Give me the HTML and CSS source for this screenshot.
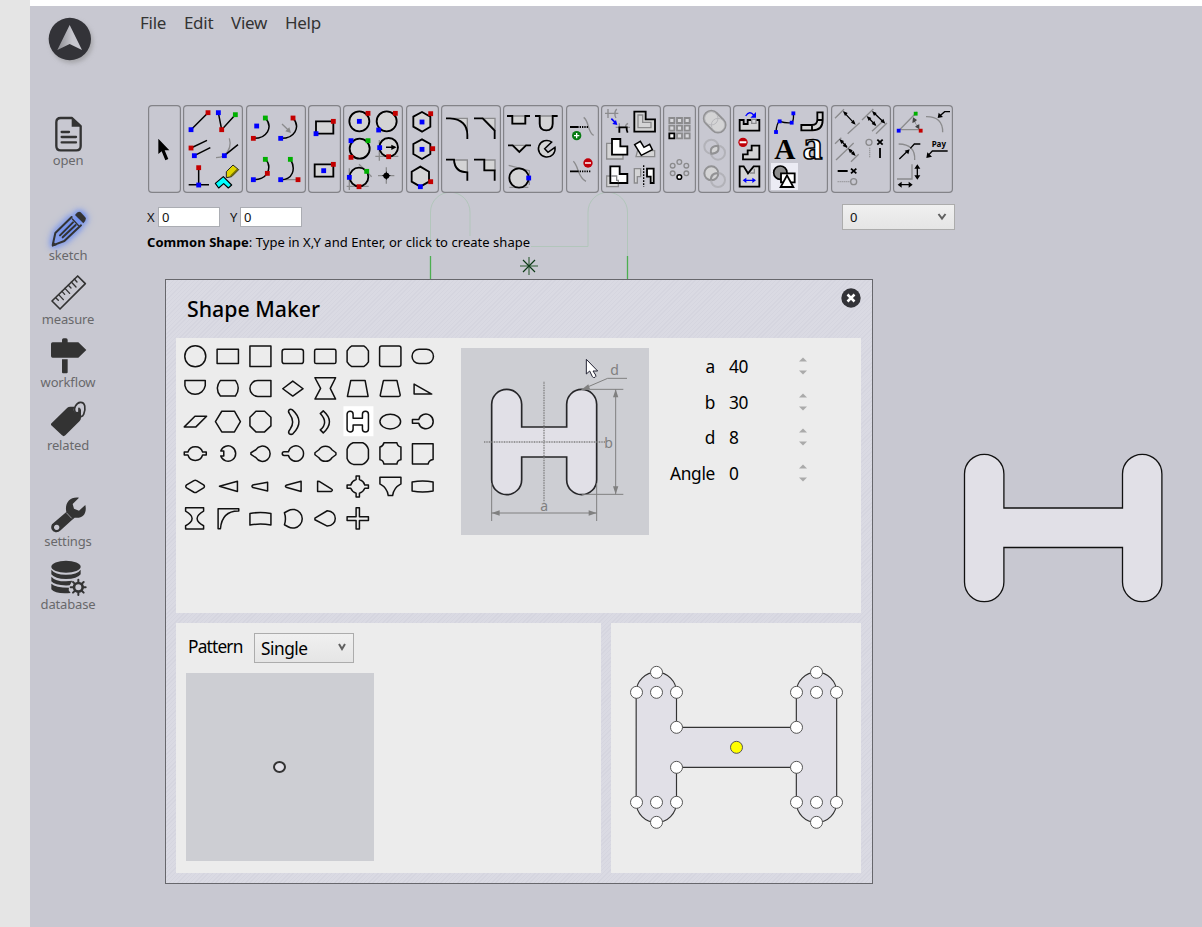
FILE: index.html
```html
<!DOCTYPE html>
<html lang="en">
<head>
<meta charset="utf-8">
<title>Shape Maker</title>
<link rel="stylesheet" href="styles.css">
</head>
<body>
<div class="gutter"></div>
<div class="app">
  <svg class="canvas" viewBox="30 6 1172 921">
    <g class="ghost">
      <path d="M430.5 250V212a19.7 19.7 0 0 1 39.5 0V236M531 246.5H588V212a19.7 19.7 0 0 1 39.5 0V256"/>
      <path class="live" d="M430.5 256V280M627.5 256V280"/>
    </g>
    <path class="star" d="M520 266H538M529 257V275"/>
    <path class="star dark" d="M523 260L535 272M535 260L523 272"/>
    <path class="shape" d="M964.5 474a19.7 19.7 0 0 1 39.4 0V508H1122.5V474a19.7 19.7 0 0 1 39.4 0V582a19.7 19.7 0 0 1-39.4 0V547.5H1003.9V582a19.7 19.7 0 0 1-39.4 0Z"/>
  </svg>

  <nav class="sidebar">
    <svg class="logo" viewBox="141 48 150 150">
      <circle cx="209.500" cy="117" r="63.500"/>
      <path d="M209 75L246 150 209 132 172 150Z" fill="url(#steel)"/>
      <defs><linearGradient id="steel"><stop offset="0" stop-color="#8b8b90"/><stop offset=".6" stop-color="#c8c8cf"/><stop offset="1" stop-color="#c8c8cf"/></linearGradient></defs>
    </svg>
    <a class="item open"><svg viewBox="150 346 108 108"><path class="ln" d="M182 352H216L242 376V436Q242 449 229 449H182Q169 449 169 436V365Q169 352 182 352Z" stroke-width="7"/><path d="M215 352V378H244L216 350Z"/><path class="ln" d="M185 394H207M185 409H228M185 425H228" stroke-width="7"/></svg>open</a>
    <a class="item sketch"><svg viewBox="60 64 108 108"><path d="M135 76Q145 62 152 68L166 83Q171 89 160 101Z"/><path class="ln" d="M125 82L76 130 68 167 103 154 153 107M129 98L90 137M137 106L98 143" stroke-width="6"/><path d="M66 171L69 156 81 166Z"/><path class="ln" d="M127 88L146 108" stroke-width="4"/></svg>sketch</a>
    <a class="item"><svg viewBox="60 255 108 108"><path class="ln" d="M143 258L166 281 90 357 66 333Z" stroke-width="5"/><path class="ln" d="M77 323L85 331M86 314L100 329M96 304L104 313M105 295L119 310M115 286L123 294M124 276L138 291M133 267L141 276" stroke-width="4"/></svg>measure</a>
    <a class="item"><svg viewBox="60 443 108 108"><path d="M96 456V449Q96 444 101 444H108Q113 444 113 449V456H145L169 479 145 502H68Q63 502 63 497V461Q63 456 68 456ZM96 507H113V546Q113 549 110 549H99Q96 549 96 546Z"/></svg>workflow</a>
    <a class="item"><svg viewBox="60 634 108 108"><path d="M63 702L112 654Q115 651 121 651H134Q128 660 134 667 140 673 147 666L148 655Q153 656 153 662V684Q153 689 149 694L106 737Q101 742 96 737L63 706Z"/><path class="ln" d="M145 669Q138 671 135 666C130 658 138 639 151 638 166 637 168 656 161 674Q159 680 153 681M147 656V668" stroke-width="5"/></svg>related</a>
    <a class="item apart"><svg viewBox="60 920 108 108"><path fill-rule="evenodd" d="M147 922L128 941 132 955 147 961 166 944C172 970 157 986 134 982L125 990 92 1020C79 1034 56 1020 66 1002L109 965C103 938 120 918 147 922ZM80 1003A8 8 0 1 0 80.100 1003Z"/><path class="slit" d="M109 967L125 984"/></svg>settings</a>
    <a class="item"><svg viewBox="60 1111 108 108"><ellipse cx="108" cy="1131" rx="44" ry="18"/><path d="M64 1140Q75 1155 108 1155 142 1155 152 1140V1154Q142 1168 108 1168 75 1168 64 1154ZM64 1161Q75 1175 108 1175L127 1173 121 1184 119 1187Q75 1189 64 1175ZM64 1182Q76 1194 117 1194L116 1202 122 1210Q76 1214 64 1199Z"/><circle class="ln" cx="145" cy="1193" r="13" stroke-width="8"/><path class="ln" d="M145 1170V1177M145 1209V1216M122 1193H130M160 1193H167M129 1177L134 1182M156 1204L161 1209M129 1209L134 1204M156 1182L161 1177" stroke-width="6"/></svg>database</a>
  </nav>

  <main class="main">
    <div class="menu"><span>File</span><span>Edit</span><span>View</span><span>Help</span></div>

    <div class="toolbar">
      <svg class="group" viewBox="12 15 99 264"><path d="M43 116V162L53 154 64 181 73 177 62 151H76Z"/></svg>
      <svg class="group wide" viewBox="117 15 180 264">
        <path class="y" d="M256 115Q265 143 241 167 230 173 216 173"/>
        <path class="k" d="M141 89L192 38M223 38L233 89 274 44M141 144L189 121M151 167L199 143M241 167L282 134M164 203V254M134 254H195"/>
        <path class="k cyan" d="M214 250L238 230 263 255 253 264 239 251 224 264Z"/>
        <path fill="#ded400" stroke="#222" stroke-width="3" d="M247 215L267 195 284 209 263 230 247 233Z"/><path d="M260 228L281 207" stroke="#766f00" stroke-width="4"/>
        <rect class="b" x="141" y="89"/><rect class="r" x="192" y="38"/><rect class="b" x="223" y="38"/><rect class="r" x="233" y="89"/><rect class="g" x="274" y="44"/><rect class="r" x="141" y="144"/><rect class="b" x="151" y="167"/><rect class="b" x="241" y="167"/><rect class="r" x="164" y="203"/><rect class="b" x="164" y="255"/>
      </svg>
      <svg class="group wide g3" viewBox="306 15 180 264">
        <path class="y" d="M410 239H462M414 72L435 92"/><path d="M441 99L424 94 436 82Z" fill="#888"/>
        <path class="k" d="M364 54C389 82 368 116 328 115M447 54C471 82 451 116 410 115M364 177C377 190 377 204 370 220 360 234 347 239 328 239M439 177C457 208 446 239 410 239"/>
        <rect class="g" x="364" y="54"/><rect class="b" x="338" y="78"/><rect class="r" x="328" y="115"/><rect class="r" x="447" y="54"/><rect class="b" x="410" y="115"/><rect class="g" x="364" y="178"/><rect class="r" x="370" y="220"/><rect class="b" x="328" y="239"/><rect class="g" x="439" y="178"/><rect class="b" x="410" y="239"/><rect class="r" x="462" y="239"/>
      </svg>
      <svg class="group" viewBox="492 15 99 264"><path class="k f t" d="M516 64H568V101H516ZM512 193H568V230H512Z"/><rect class="r" x="568" y="64"/><rect class="b" x="516" y="101"/><rect class="r" x="568" y="193"/><rect class="b" x="539" y="212"/></svg>

      <svg class="group wide" viewBox="9 15 180 264">
        <path class="y" d="M118 120V182M106 169H175M28 205V270M20 259H86M57 193L95 230"/>
        <g class="k f t"><circle cx="58" cy="64" r="30"/><circle cx="140" cy="64" r="30"/><circle cx="59" cy="146" r="30"/><circle cx="146" cy="142" r="28"/><circle cx="57" cy="231" r="28"/></g>
        <path class="k" d="M138 142H164"/><path d="M170 142L154 134V150Z"/><path class="y" d="M114 227H163M139 202V251"/><path d="M139 213Q141 225 153 227 141 229 139 241 137 229 125 227 137 225 139 213Z"/><circle cx="139" cy="227" r="9"/>
        <rect class="b" x="58" y="64"/><rect class="r" x="84" y="40"/><rect class="r" x="166" y="40"/><rect class="b" x="116" y="90"/><rect class="b" x="33" y="122"/><rect class="g" x="84" y="122"/><rect class="r" x="33" y="172"/><rect class="b" x="119" y="143"/><rect class="r" x="146" y="170"/><rect class="b" x="28" y="232"/><rect class="g" x="80" y="214"/><rect class="r" x="57" y="260"/>
      </svg>
      <svg class="group g3" viewBox="198 15 99 264"><path class="k f t" d="M246 36L271 50V80L246 95 220 80V50ZM246 118L271 132V162L246 177 220 162V132ZM241 200L267 215V245L241 260 215 245V215Z"/><rect class="r" x="272" y="41"/><rect class="b" x="246" y="66"/><rect class="r" x="278" y="146"/><rect class="b" x="246" y="148"/><rect class="r" x="272" y="245"/><rect class="b" x="241" y="260"/></svg>
      <svg class="group wide" viewBox="303 15 180 264">
        <path class="y f" d="M338 55H382V99Q374 62 338 55ZM430 55H465V90ZM342 180H382V217Q345 216 342 180ZM433 180H465V211H433Z"/>
        <path class="k t" d="M318 55H330Q382 58 382 105V117M402 55H428L464 92V117M318 179H342Q344 217 382 217V242M402 179H433V211H464V242"/>
      </svg>
      <svg class="group wide" viewBox="9 15 180 264">
        <path class="y f" d="M37 48H76V71H37ZM120 48H158V70Q158 91 139 91 120 91 120 70ZM38 136H78L58 156Z"/>
        <path class="k t" d="M21 48H37V71H76V48H90M105 48H119V71Q119 91 139 91 158 91 158 71V48H173M24 136H38L58 156 78 136H93"/>
        <path class="y" d="M26 196L88 212V255M28 262H85"/><circle class="k f t" cx="57" cy="234" r="29"/><rect class="b" x="86" y="234"/>
        <path class="k f" d="M155 126A25 25 0 1 0 165 142L144 157 134 146 155 126Z"/>
      </svg>
      <svg class="group g3" viewBox="198 15 99 264"><path class="y" d="M251 52C268 63 262 98 281 106M220 184C237 200 232 232 258 244"/><path class="k t" d="M210 81H236M210 214H236"/><path class="k t" stroke-dasharray="4 3" d="M239 81H265M239 214H272"/><circle cx="230" cy="107" r="14" fill="#087b13"/><path d="M222 107H238M230 99V115" stroke="#fff" stroke-width="4"/><circle cx="264" cy="189" r="14" fill="#c0000a"/><path d="M255 189H273" stroke="#fff" stroke-width="5"/></svg>
      <svg class="group wide" viewBox="303 15 180 264">
        <path class="y" d="M315 40H355M324 27V54M350 27Q340 39 348 54"/><path d="M334 56L347 69" stroke="#00f" stroke-width="5"/><path d="M352 75L337 72 348 60Z" fill="#00f"/><path class="y" d="M347 82H390M358 70V82M384 70Q374 76 378 82"/><path class="k t" d="M358 98V82H380Q379 91 383 98"/>
        <path class="k f t" d="M403 35H437V58H465V95H403Z"/><path class="y" d="M414 45H428V67H453V83H414Z"/>
        <path class="y f" d="M320 130H350V149H369V177H320Z"/><path class="k w t" d="M336 117H361V139H382V164H336Z"/>
        <path class="y f" d="M408 170L416 139 435 152H464V170Z"/><path class="k w" d="M404 134L421 124 432 142 449 133 457 149 424 166Z"/>
        <path class="y f" d="M320 228H355V260H320Z"/><path class="k w t" d="M331 199H359V222H382V249H331Z"/><path class="y" d="M333 228H350V241H355V247"/>
        <path class="y f" d="M403 206H422V230H412V249H403Z"/><path class="k w t" d="M461 206H441V230H452V249H461Z"/><path class="k dash" d="M431 196V260"/>
      </svg>
      <svg class="group" viewBox="9 15 99 264"><path class="y w t" d="M28 54H43V69H28ZM51 54H66V69H51ZM74 54H89V69H74ZM28 77H43V92H28ZM51 77H66V92H51ZM74 77H89V92H74ZM51 100H66V115H51ZM74 100H89V115H74Z"/><path class="k w t" d="M28 100H43V115H28Z"/><g class="y"><circle cx="58" cy="186" r="7"/><circle cx="38" cy="197" r="7"/><circle cx="79" cy="197" r="7"/><circle cx="38" cy="220" r="7"/><circle cx="79" cy="220" r="7"/></g><circle class="k w" cx="58" cy="231" r="7"/></svg>
      <svg class="group" viewBox="114 15 99 264"><g class="p"><path class="f" d="M138 71A22 22 0 1 1 170 39L190 59A22 22 0 1 1 158 91Z"/><circle cx="174" cy="75" r="20" class="thin"/><circle cx="154" cy="55" r="20" class="thin"/><circle cx="154" cy="140" r="21" class="l"/><circle cx="174" cy="158" r="21" class="l"/><path class="f" d="M174 137Q181 160 154 161 147 138 174 137Z"/><circle class="f" cx="154" cy="220" r="21"/><circle class="l" cx="174" cy="240" r="21"/><path d="M176 220Q151 217 153 242"/></g></svg>
      <svg class="group" viewBox="219 15 99 264"><path class="k f t" d="M239 60H251V72H263V60H298V92H239Z"/><path class="y w" d="M275 58H288V70H275Z"/><path d="M257 48Q269 30 281 45" fill="none" stroke="#00f" stroke-width="4"/><path d="M288 36V53H271Z" fill="#00f"/><path class="k f t" d="M249 178V163H263V151H275V137H298V178Z"/><circle cx="249" cy="127" r="14" fill="#c0000a"/><path d="M239 127H259" stroke="#fff" stroke-width="6"/><path class="k f t" d="M239 199H251L264 220 281 199H298V260H239Z"/><path class="y" d="M270 219H283V206"/><path d="M255 241H281" stroke="#00f" stroke-width="4"/><path d="M248 241L259 233V249ZM288 241L277 233V249Z" fill="#00f"/></svg>
      <svg class="group wide" viewBox="324 15 180 264">
        <rect x="333" y="189" width="81" height="81" fill="#ececf4"/>
        <path class="k dim" d="M348 96Q350 68 359 64 377 70 395 68 402 62 400 40"/><rect class="b small" x="348" y="96"/><rect class="b small" x="359" y="64"/><rect class="b small" x="395" y="68"/><rect class="b small" x="400" y="40"/>
        <path class="k f t" d="M424 75H456Q472 74 472 59V37H488V61Q488 91 457 91H424ZM456 75V91M472 60H488"/>
        <text x="343" y="177" class="serif">A</text><text x="428" y="178" class="serif hollow">a</text>
        <circle cx="361" cy="218" r="20" fill="#8d8d8d" stroke="#000" stroke-width="5"/><path class="k w t" d="M363 220H404V247H363Z"/><path class="k w t" d="M381 226L400 261H362Z"/>
      </svg>
      <svg class="group wide g3" viewBox="18 15 180 264">
        <path class="y" d="M30 55L57 28M68 101L104 68M111 60L145 27M141 94L172 65M153 101L186 69M30 131L49 113M33 180L86 129M78 185L101 163"/>
        <path class="k dim" d="M57 37L88 70M145 37L176 67M129 52L151 75M48 122L66 141M73 149L87 162"/>
        <path d="M54 33L68 39 60 48ZM92 74L78 68 86 59ZM141 33L155 39 147 48ZM181 71L167 65 175 56ZM125 48L139 54 131 63ZM154 78L140 72 148 63ZM43 117L57 123 49 132ZM67 144L53 138 61 129ZM69 145L83 151 75 160ZM92 168L78 162 86 153Z"/>
        <circle class="y" cx="132" cy="127" r="9"/><circle class="y" cx="86" cy="245" r="9"/><path class="y" stroke-dasharray="3 3" d="M134 143V174M38 245H75"/><path class="k t" d="M157 119L173 134M173 119L157 134M165 144V174M38 213H68M78 206L94 220M94 206L78 220"/>
      </svg>
      <svg class="group wide" viewBox="204 15 180 264">
        <path class="y" d="M221 92L276 36M221 89H286M303 50Q354 49 353 97M221 132Q272 133 269 180M216 237H261V193"/><path d="M264 52L276 60 270 65 275 76 283 73 283 88 270 80 275 77 269 66 262 69Z" fill="#444"/>
        <rect class="g small" x="272" y="41"/><rect class="b small" x="221" y="92"/><rect class="r small" x="287" y="92"/>
        <path class="k dim" d="M345 47L359 35H375M223 177L247 154M256 145L268 132H286M368 153H322L309 167M226 254H255M277 202V230"/>
        <path d="M338 54L341 38 354 51ZM254 148L250 163 239 152ZM304 174L307 157 321 170ZM218 254L230 245V263ZM263 254L251 245V263ZM277 193L268 206H286ZM277 239L268 226H286Z"/>
        <text x="320" y="142" class="pay">Pay</text>
      </svg>
    </div>

    <div class="coords">
      <label>X</label><div class="field">0</div><label class="second">Y</label><div class="field">0</div>
      <div class="select layer">0<svg viewBox="0 0 10 8"><path d="M1.500 1L5 5.500 8.500 1"/></svg></div>
    </div>
    <p class="status"><b>Common Shape</b><span>: Type in X,Y and Enter, or click to create shape</span></p>
  </main>

  <section class="dialog">
    <header><h1>Shape Maker</h1><svg class="close" viewBox="0 0 20 20"><circle cx="10" cy="10" r="9.700"/><path d="M6.500 6.500L13.500 13.500M13.500 6.500L6.500 13.500"/></svg></header>
    <div class="panel top">
      <div class="shapes">
        <svg viewBox="9.2 -.7 97.500 97.500"><circle cx="58" cy="48" r="31.500"/></svg>
        <svg viewBox="106.7 -.7 97.500 97.500"><path d="M122 27H186V70H122Z"/></svg>
        <svg viewBox="204.2 -.7 97.500 97.500"><path d="M222 17H285V79H222Z"/></svg>
        <svg viewBox="301.7 -.7 97.500 97.500"><rect x="317" y="27" width="64" height="43" rx="7"/></svg>
        <svg viewBox="399.2 -.7 97.500 97.500"><rect x="416" y="27" width="64" height="43" rx="5"/></svg>
        <svg viewBox="496.7 -.7 97.500 97.500"><path d="M526 17H562Q571 22 576 32V65Q571 74 562 79H526Q517 74 512 65V32Q517 22 526 17Z"/></svg>
        <svg viewBox="594.2 -.7 97.500 97.500"><rect x="611" y="17" width="64" height="62" rx="6"/></svg>
        <svg viewBox="691.7 -.7 97.500 97.500"><rect x="707" y="27" width="64" height="43" rx="21"/></svg>

        <svg viewBox="9.200 96.800 97.500 97.500"><path d="M27 122H88V138A31 31 0 0 1 27 138Z"/></svg>
        <svg viewBox="106.700 96.800 97.500 97.500"><path d="M132 122H177Q194 146 177 169H132Q113 146 132 122Z"/></svg>
        <svg viewBox="204.200 96.800 97.500 97.500"><path d="M285 122H246A24 24 0 0 0 246 170H285Z"/></svg>
        <svg viewBox="301.700 96.800 97.500 97.500"><path d="M349 124L380 147 349 169 319 147Z"/></svg>
        <svg viewBox="399.200 96.800 97.500 97.500"><path d="M417 114H479L463 146 479 178H417L434 146Z"/></svg>
        <svg viewBox="496.700 96.800 97.500 97.500"><path d="M523 122H566L575 170H513Z"/></svg>
        <svg viewBox="594.200 96.800 97.500 97.500"><path d="M624 122H663L673 166Q673 170 668 170H617Q612 170 613 166L622 124Z"/></svg>
        <svg viewBox="691.700 96.800 97.500 97.500"><path d="M713 133V163H766Z"/></svg>

        <svg viewBox="9.200 194.300 97.500 97.500"><path d="M57 228H92L60 260H25Z"/></svg>
        <svg viewBox="106.700 194.300 97.500 97.500"><path d="M136 213H174L192 244 174 275H136L117 244Z"/></svg>
        <svg viewBox="204.200 194.300 97.500 97.500"><path d="M240 213H266L285 231V257L266 275H240L222 257V231Z"/></svg>
        <svg viewBox="301.700 194.300 97.500 97.500"><path d="M348 209Q386 243 350 280 344 285 338 280 334 275 341 267 357 245 339 220 334 214 338 209 342 205 348 209Z"/></svg>
        <svg viewBox="399.200 194.300 97.500 97.500"><path d="M442 212Q479 244 442 278L433 269Q459 247 433 220Z"/></svg>
        <svg viewBox="496.700 194.300 97.500 97.500"><rect x="501" y="198" width="90" height="90" class="picked"/><path d="M512 222a8.500 8.500 0 0 1 18 0V234H558V222a8.500 8.500 0 0 1 18 0V266a8.500 8.500 0 0 1-18 0V254H530V266a8.500 8.500 0 0 1-18 0Z"/></svg>
        <svg viewBox="594.200 194.300 97.500 97.500"><ellipse cx="643" cy="244" rx="31" ry="22"/></svg>
        <svg viewBox="691.700 194.300 97.500 97.500"><path d="M727 238H708V249H727A22 22 0 1 0 727 238Z"/></svg>

        <svg viewBox="9.200 291.800 97.500 97.500"><path d="M25 337H36A23 23 0 0 1 80 337H91V346H80A23 23 0 0 1 36 346H25Z"/></svg>
        <svg viewBox="106.700 291.800 97.500 97.500"><path d="M133 334A23 23 0 1 1 133 349H142V334Z"/></svg>
        <svg viewBox="204.200 291.800 97.500 97.500"><path d="M240 330A23 23 0 1 1 240 354L225 344V339Z"/></svg>
        <svg viewBox="301.700 291.800 97.500 97.500"><path d="M336 336A23 23 0 1 1 336 347H323A5 5 0 0 1 323 336Z"/></svg>
        <svg viewBox="399.200 291.800 97.500 97.500"><path d="M429 330A23 23 0 0 1 468 330L480 339V345L468 354A23 23 0 0 1 429 354L417 345V339Z"/></svg>
        <svg viewBox="496.700 291.800 97.500 97.500"><path d="M530 309H559Q572 315 576 329V356Q570 370 558 374H531Q517 370 512 356V329Q516 315 530 309Z"/></svg>
        <svg viewBox="594.200 291.800 97.500 97.500"><path d="M624 309H663Q664 319 675 322V360Q664 361 663 373H624Q622 361 612 360V322Q622 319 624 309Z"/></svg>
        <svg viewBox="691.700 291.800 97.500 97.500"><path d="M708 312H770V359Q757 361 755 373H708Z"/></svg>

        <svg viewBox="9.200 389.300 97.500 97.500"><path d="M54 421Q58 419 62 421L83 434Q88 439 83 443L62 456Q58 458 54 456L32 443Q27 439 32 434Z"/></svg>
        <svg viewBox="106.700 389.300 97.500 97.500"><path d="M183 423V454L129 438Z"/></svg>
        <svg viewBox="204.200 389.300 97.500 97.500"><path d="M275 426V452L231 442Q225 438 231 434Z"/></svg>
        <svg viewBox="301.700 389.300 97.500 97.500"><path d="M374 423V454L329 441Q325 438 329 435Z"/></svg>
        <svg viewBox="399.200 389.300 97.500 97.500"><path d="M425 423V454H465Q473 450 466 446L431 424Z"/></svg>
        <svg viewBox="496.700 389.300 97.500 97.500"><path d="M539 407H549V418Q561 422 565 434H576V444H565Q561 455 549 459V470H539V459Q527 455 523 444H512V434H523Q527 422 539 418Z"/></svg>
        <svg viewBox="594.200 389.300 97.500 97.500"><path d="M612 411H675V431Q653 443 650 466H637Q634 443 612 431Z"/></svg>
        <svg viewBox="691.700 389.300 97.500 97.500"><path d="M707 425Q739 419 770 425V452Q739 458 707 452Z"/></svg>

        <svg viewBox="9.200 486.800 97.500 97.500"><path d="M29 504H83V514Q44 536 83 558V568H29V558Q68 536 29 514Z"/></svg>
        <svg viewBox="106.700 486.800 97.500 97.500"><path d="M125 507H187V514Q137 513 132 567H125Z"/></svg>
        <svg viewBox="204.200 486.800 97.500 97.500"><path d="M222 521Q253 516 285 521V556Q253 550 222 556Z"/></svg>
        <svg viewBox="301.700 486.800 97.500 97.500"><path d="M324 519L335 513A28 28 0 1 1 335 561L324 555Q330 537 324 519Z"/></svg>
        <svg viewBox="399.200 486.800 97.500 97.500"><path d="M417 535L454 513C486 515 486 557 454 559L417 540Z"/></svg>
        <svg viewBox="496.700 486.800 97.500 97.500"><path d="M539 504H549V531H576V542H549V568H539V542H512V531H539Z"/></svg>
      </div>

      <svg class="preview" viewBox="18 24 564 561">
        <path class="outline" d="M110 193a45 45 0 0 1 90 0V261H335V193a45 45 0 0 1 90 0V419a45 45 0 0 1-90 0V351H200V419a45 45 0 0 1-90 0Z"/>
        <g class="dims"><path d="M110 430V543M425 430V543M110 519H425M380 148H505M380 463H505M482 148V463M516 115H458L400 140"/><path stroke-dasharray="3 2" stroke-width="4" d="M87 306H452M267 125V487"/></g>
        <path fill="#808080" d="M110 519L134 511V527ZM425 519L401 511V527ZM482 148L474 172H490ZM482 463L474 439H490ZM378 150L400 133 405 147Z"/>
        <text x="256" y="514">a</text><text x="448" y="323">b</text><text x="466" y="104">d</text>
        <path d="M394 58V102L404 93 412 110Q415 114 420 112 424 110 422 105L414 93H428Z" fill="#fff" stroke="#223" stroke-width="3"/>
      </svg>

      <div class="params">
        <label>a</label><span>40</span><svg viewBox="0 0 8 18"><path d="M0 4.500L4 .5 8 4.500ZM0 13.500L4 17.500 8 13.500Z"/></svg>
        <label>b</label><span>30</span><svg viewBox="0 0 8 18"><path d="M0 4.500L4 .5 8 4.500ZM0 13.500L4 17.500 8 13.500Z"/></svg>
        <label>d</label><span>8</span><svg viewBox="0 0 8 18"><path d="M0 4.500L4 .5 8 4.500ZM0 13.500L4 17.500 8 13.500Z"/></svg>
        <label>Angle</label><span>0</span><svg viewBox="0 0 8 18"><path d="M0 4.500L4 .5 8 4.500ZM0 13.500L4 17.500 8 13.500Z"/></svg>
      </div>
    </div>
    <div class="panel pattern">
      <div class="choose"><label>Pattern</label><div class="select">Single<svg viewBox="0 0 10 8"><path d="M2 1L5 6 8 1"/></svg></div></div>
      <div class="sample"><i></i></div>
    </div>
    <div class="panel points">
      <svg viewBox="33 39 750 750">
        <path class="body" d="M108.500 247a60.500 60.500 0 0 1 121 0V352H589V247a60.500 60.500 0 0 1 121 0V577a60.500 60.500 0 0 1-121 0V472H229.500V577a60.500 60.500 0 0 1-121 0Z"/>
        <g class="handles"><circle cx="169.500" cy="187" r="18"/><circle cx="649.500" cy="187" r="18"/><circle cx="109.500" cy="247" r="18"/><circle cx="169.500" cy="247" r="18"/><circle cx="229.500" cy="247" r="18"/><circle cx="589.500" cy="247" r="18"/><circle cx="649.500" cy="247" r="18"/><circle cx="709.500" cy="247" r="18"/><circle cx="229.500" cy="352" r="18"/><circle cx="589.500" cy="352" r="18"/><circle cx="229.500" cy="472" r="18"/><circle cx="589.500" cy="472" r="18"/><circle cx="109.500" cy="577" r="18"/><circle cx="169.500" cy="577" r="18"/><circle cx="229.500" cy="577" r="18"/><circle cx="589.500" cy="577" r="18"/><circle cx="649.500" cy="577" r="18"/><circle cx="709.500" cy="577" r="18"/><circle cx="169.500" cy="637" r="18"/><circle cx="649.500" cy="637" r="18"/><circle class="center" cx="409.500" cy="412" r="18"/></g>
      </svg>
    </div>
  </section>
</div>
</body>
</html>
```
FILE: styles.css
```css
* { box-sizing: border-box; }
body { margin: 0; height: 927px; display: flex; overflow: hidden; font-family: "Noto Sans", "Open Sans", sans-serif; color: #111; background: #fff; }
svg { display: block; }
.gutter { width: 30px; background: #e5e5e5; }
.app { position: relative; display: flex; width: 1172px; height: 921px; margin-top: 6px; background: #c8c8d1; }

.canvas { position: absolute; inset: 0; width: 1172px; height: 921px; fill: none; }
.ghost path { stroke: #b2c6bb; }
.ghost .live { stroke: #4caf50; stroke-width: 1.3; }
.star { stroke: #5f7f66; stroke-width: 1.6; }
.star.dark { stroke: #0d3a17; stroke-width: 1.2; }
.shape { fill: #e1e0e7; stroke: #111; stroke-width: 1.3; }

.sidebar { position: relative; width: 110px; padding-top: 10px; }
.logo { width: 50px; height: 50px; margin-left: 17px; filter: drop-shadow(2px 3px 2px #8888); }
.logo circle { fill: #333338; }
.item { display: flex; flex-direction: column; align-items: center; width: 76px; height: 54px; margin-bottom: 9.3px; font-size: 13px; line-height: 18px; letter-spacing: -.15px; color: #68686b; }
.item svg { width: 36px; height: 36px; margin-bottom: -1px; flex: none; overflow: visible; fill: #333; }
.item .ln { fill: none; stroke: #333; stroke-linecap: round; stroke-linejoin: round; }
.item .slit { fill: none; stroke: #c8c8d1; stroke-width: 2; }
.open { margin-top: 49.7px; margin-bottom: 41.7px; }
.sketch svg { filter: drop-shadow(0 0 3px #5b82f5) drop-shadow(0 0 3px #6b8df3); }
.apart { margin-top: 41.8px; }

.main { position: relative; flex: 1; }
.menu { display: flex; gap: 17.7px; height: 34px; font-size: 17px; line-height: 34px; letter-spacing: -.25px; color: #333; }
.toolbar { display: flex; gap: 2px; margin: 65px 0 0 8px; }
.group { width: 33px; height: 88px; flex: none; border-radius: 4px; box-shadow: inset 0 0 0 1.2px #838388; }
.group.wide { width: 60px; }
.g3 { margin-left: 1px; }
.group rect.r, .group rect.g, .group rect.b { width: 14.5px; height: 14.5px; transform: translate(-7.2px, -7.2px); }
.group rect.small { width: 11.5px; height: 11.5px; transform: translate(-5.7px, -5.7px); }
.group rect.r { fill: #c40000; }
.group rect.g { fill: #00b000; }
.group rect.b { fill: #00f; }
.k { fill: none; stroke: #000; stroke-width: 4.5; }
.y, .p { fill: none; stroke: #8b8b8d; stroke-width: 4; }
.t { stroke-width: 5.5; }
.p { stroke-width: 6; stroke: #929294; }
.p .l { stroke: #b2b2b8; }
.p .thin { stroke: #b8b8bc; stroke-width: 3; }
.f { fill: #d4d4d5; }
.w { fill: #fff; }
.y.w { fill: #d8d8dc; }
.cyan { fill: #0ff; stroke-width: 3.5; stroke-linejoin: round; }
.dim { stroke-width: 4; }
.dash { stroke-width: 4; stroke-dasharray: 5 4; }
.serif { font: bold 88px "Liberation Serif", serif; }
.hollow { font-size: 118px; fill: #fff; stroke: #000; stroke-width: 4.5; }
.pay { font: bold 24px "Noto Sans", sans-serif; }

.coords { display: flex; align-items: center; height: 26px; margin: 11px 0 0 7px; font-size: 13px; }
.coords label { width: 11px; }
.coords .second { margin-left: 10px; width: 10px; }
.field { width: 62px; height: 20px; padding-left: 3px; border: 1px solid #abadb3; background: #fff; line-height: 18px; }
.select { display: flex; align-items: center; justify-content: space-between; padding: 0 7px; border: 1px solid #acacac; background: linear-gradient(#f0f0f0, #e5e5e5); }
.select svg { width: 10px; height: 8px; fill: none; stroke: #606060; stroke-width: 2; }
.layer { width: 113px; height: 26px; margin-left: 540px; }
.status { margin: 3px 0 0 7px; font-size: 13px; line-height: 18px; color: #000; white-space: nowrap; }
.status b { letter-spacing: .05px; }
.status span { letter-spacing: .04px; }

.dialog { position: absolute; left: 135px; top: 273px; width: 708px; height: 605px; display: grid; grid-template: 58px 275px 250px / 425px 250px; gap: 0 10px; padding: 0 10px; border: 1.5px solid #67676c; background: repeating-linear-gradient(135deg, #dadae3 0 2px, #d5d5df 2px 3px); }
.dialog header { grid-column: 1 / 3; display: flex; justify-content: space-between; padding: 8px 0 0 11px; }
.dialog h1 { margin: 0; font-size: 21.3px; font-weight: 500; line-height: 42px; color: #000; }
.close { width: 20px; height: 20px; fill: #333338; }
.close path { stroke: #fff; stroke-width: 2.5; }
.panel { background: #ececec; }
.top { grid-column: 1 / 3; display: flex; }
.shapes { display: grid; grid-template-columns: repeat(8, 32.5px); grid-auto-rows: 32.5px; padding: 1.9px 0 0 3px; align-content: start; }
.shapes svg { width: 32.5px; height: 32.5px; fill: none; stroke: #111; stroke-width: 4.5; stroke-linejoin: round; }
.shapes .picked { fill: #fff; stroke: none; }
.preview { width: 188px; height: 187px; margin: 10px 0 0 22px; background: #cdced3; }
.outline { fill: #e1e0e7; stroke: #262629; stroke-width: 5; }
.dims { fill: none; stroke: #808080; stroke-width: 3; }
.preview text { font: 42px "Noto Sans", sans-serif; fill: #808080; }
.params { display: grid; grid-template-columns: 66px 55.5px 8px; grid-auto-rows: 35.7px; column-gap: 14px; align-content: start; align-items: center; padding-top: 10.7px; font-size: 17.3px; letter-spacing: -.3px; color: #000; }
.params label { text-align: right; }
.params svg { width: 8px; height: 18px; margin-top: -1px; fill: #aaa; }
.pattern, .points { margin-top: 10px; height: 250px; }
.pattern { padding: 10px; }
.choose { display: flex; height: 30px; font-size: 17.3px; line-height: 28px; letter-spacing: -.5px; color: #000; }
.choose label { width: 66px; margin-left: 2px; letter-spacing: -.8px; }
.choose .select { width: 100px; padding: 1px 6px 0; }
.choose .select svg { margin-top: -4px; }
.sample { display: grid; place-items: center; width: 188px; height: 188px; margin-top: 10px; padding-right: 1px; background: #cdced3; }
.sample i { width: 13px; height: 12px; border: 2px solid #333; border-radius: 50%; background: #e1e0e7; }
.points svg { width: 250px; height: 250px; }
.body { fill: #e1e0e7; stroke: #333; stroke-width: 3.5; }
.handles { fill: #fff; stroke: #555; stroke-width: 3; }
.center { fill: #ff0; }
```
